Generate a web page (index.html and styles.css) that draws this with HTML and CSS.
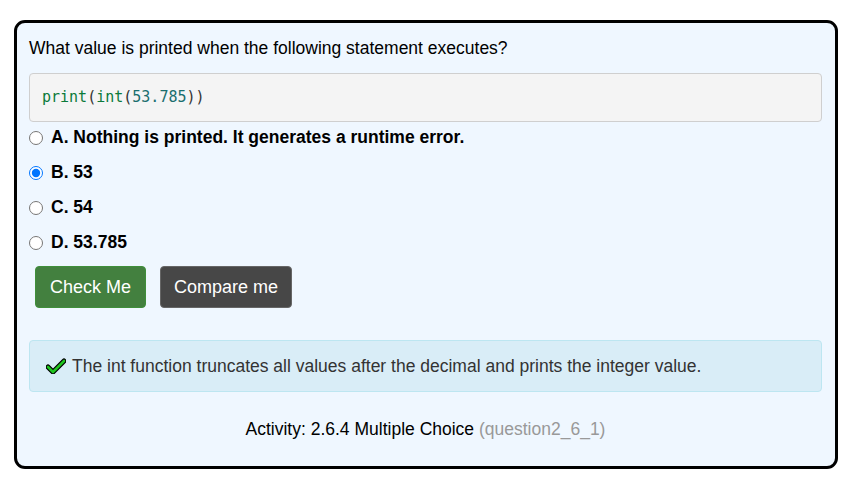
FILE: index.html
```html
<!DOCTYPE html>
<html>
<head>
<meta charset="utf-8">
<link rel="stylesheet" href="styles.css">
</head>
<body>
<div class="card">
  <p class="question">What value is printed when the following statement executes?</p>
  <pre class="code"><span class="fn">print</span><span class="p">(</span><span class="fn">int</span><span class="p">(</span><span class="num">53.785</span><span class="p">))</span></pre>
  <ul class="options">
    <li><input type="radio" name="q"><label>A. Nothing is printed. It generates a runtime error.</label></li>
    <li><input type="radio" name="q" checked><label>B. 53</label></li>
    <li><input type="radio" name="q"><label>C. 54</label></li>
    <li><input type="radio" name="q"><label>D. 53.785</label></li>
  </ul>
  <div class="buttons">
    <button class="btn btn-check">Check Me</button>
    <button class="btn btn-compare">Compare me</button>
  </div>
  <div class="feedback">
    <svg class="check" width="20" height="16" viewBox="0 0 20 16"><path d="M2 9 L7 14 L18 3" fill="none" stroke="#000" stroke-width="5" stroke-linejoin="round" stroke-linecap="round"/><path d="M2 9 L7 14 L18 3" fill="none" stroke="#1fc41f" stroke-width="2.6" stroke-linejoin="round" stroke-linecap="round"/></svg>
    <span>The int function truncates all values after the decimal and prints the integer value.</span>
  </div>
  <p class="activity">Activity: 2.6.4 Multiple Choice <span class="qid">(question2_6_1)</span></p>
</div>
</body>
</html>
```

FILE: styles.css
```css
html, body {
  margin: 0;
  padding: 0;
  background: #fff;
}
body {
  font-family: "Liberation Sans", Arial, sans-serif;
  font-size: 17.5px;
  color: #000;
  padding: 20px 0 0 14px;
}
.card {
  width: 824px;
  height: 449px;
  box-sizing: border-box;
  border: 3px solid #000;
  border-radius: 11px;
  background: #eff7ff;
  padding: 14px 13px 0 12px;
}
.question {
  margin: 0;
  line-height: 22px;
}
.code {
  margin: 14px 0 0 0;
  height: 49px;
  box-sizing: border-box;
  background: #f4f4f4;
  border: 1px solid #cfcfcf;
  border-radius: 4px;
  padding: 14px 12px;
  font-family: "DejaVu Sans Mono", Consolas, monospace;
  font-size: 15px;
  line-height: 19px;
}
.fn { color: #0b7a3a; }
.p { color: #333; }
.num { color: #1a6e6e; }
.options {
  list-style: none;
  margin: -2px 0 0 0;
  padding: 0;
}
.options li {
  display: flex;
  align-items: center;
  height: 35px;
  font-weight: bold;
}
.options input {
  margin: 0 8px 0 0;
  width: 14px;
  height: 14px;
}
.buttons {
  display: flex;
  gap: 14px;
  margin: 6px 0 0 6px;
}
.btn {
  font-family: "Liberation Sans", Arial, sans-serif;
  font-size: 18px;
  color: #fff;
  height: 42px;
  border-radius: 4px;
  padding: 0;
  white-space: nowrap;
}
.btn-check {
  background: #43803f;
  border: 1px solid #3f8f3a;
  width: 111px;
}
.btn-compare {
  background: #474747;
  border: 1px solid #666;
  width: 132px;
}
.feedback {
  margin-top: 32px;
  height: 52px;
  box-sizing: border-box;
  background: #d9edf7;
  border: 1px solid #bde6f1;
  border-radius: 4px;
  display: flex;
  align-items: center;
  padding: 0 0 0 16px;
  color: #333;
  gap: 6px;
}
.activity {
  margin: 27px 0 0 0;
  text-align: center;
  color: #000;
}
.qid {
  color: #999;
}
```
